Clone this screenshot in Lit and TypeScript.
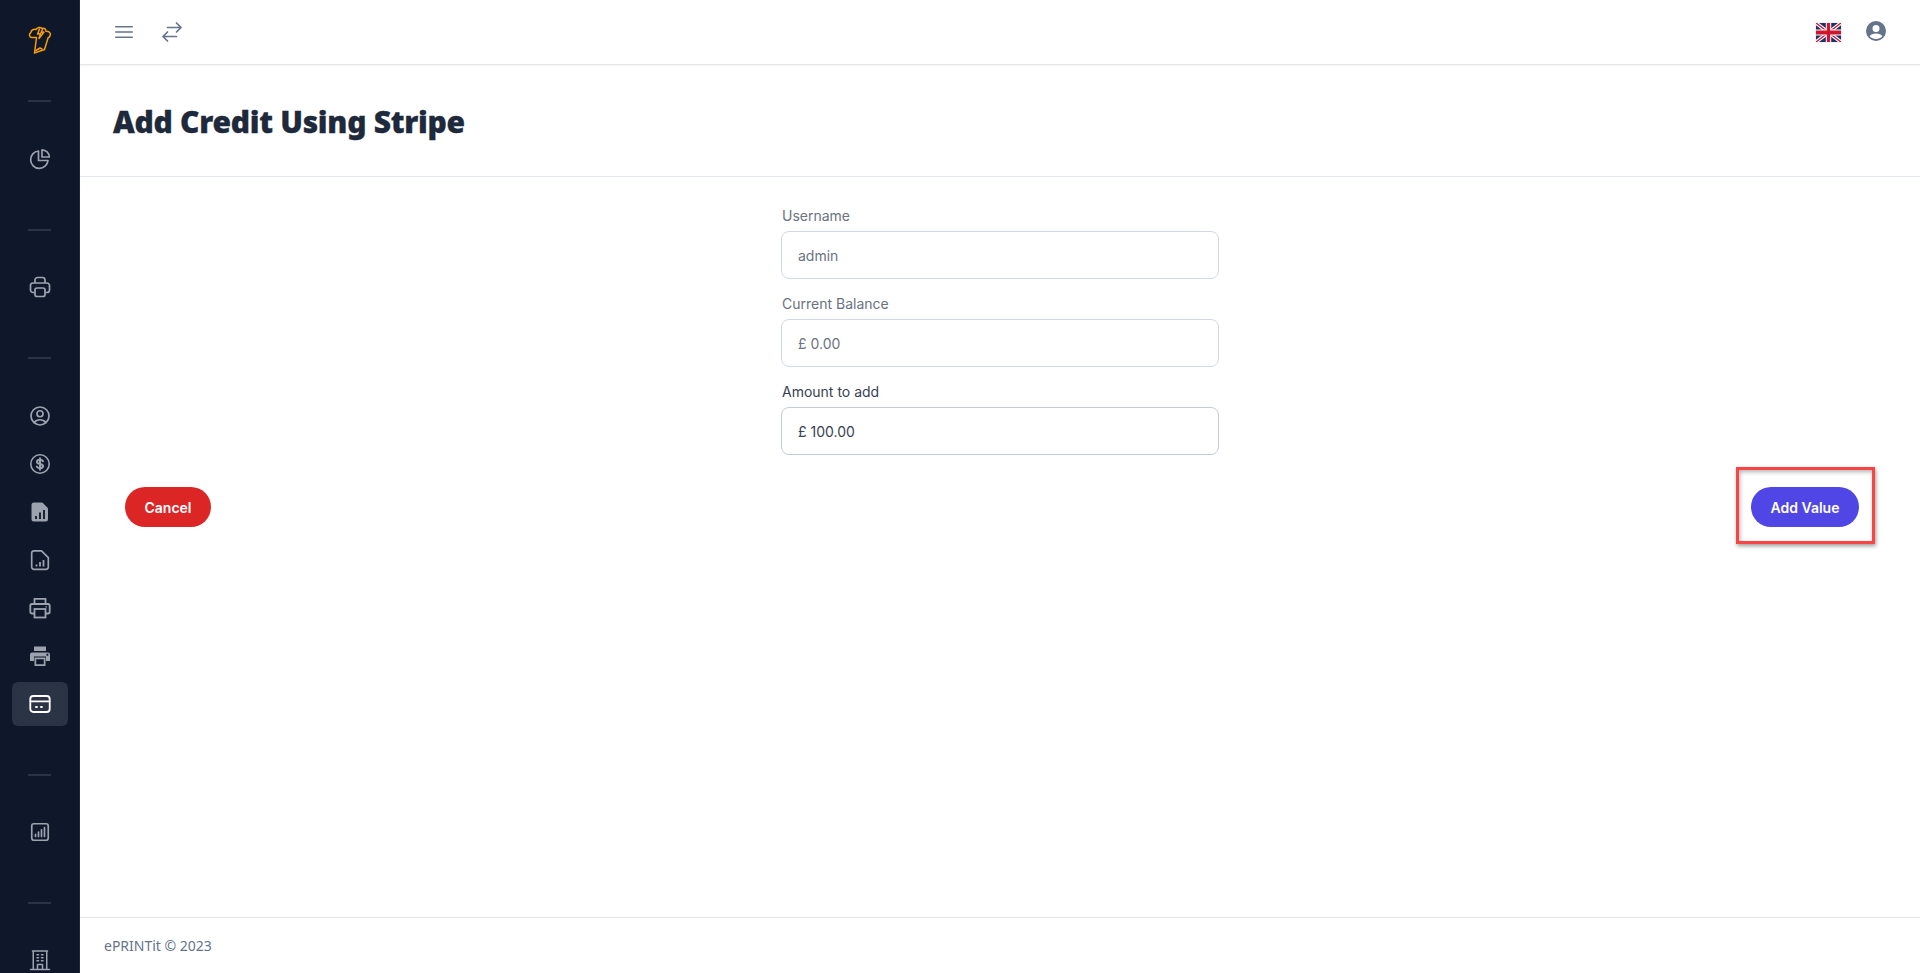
import { LitElement, html, css, svg } from "lit";
import { customElement } from "lit/decorators.js";

const o = (d: string, sw = 1.5) =>
  svg`<svg class="ic" viewBox="0 0 24 24" fill="none" stroke="currentColor" stroke-width=${sw} stroke-linecap="round" stroke-linejoin="round"><path d=${d}></path></svg>`;

const pie = svg`<svg class="ic" viewBox="0 0 24 24" fill="none" stroke="currentColor" stroke-width="1.700" stroke-linejoin="round"><path d="M10.500 4a8.700 8.700 0 1 0 9.500 9.500h-9.500z"></path><path d="M14 2.800a7.500 7.500 0 0 1 7.300 7.200H14z"></path></svg>`;
const printerRound = svg`<svg class="ic" viewBox="0 0 24 24" fill="none" stroke="currentColor" stroke-width="1.700" stroke-linejoin="round"><path d="M7 8V5a2.500 2.500 0 0 1 2.500-2.500h5A2.500 2.500 0 0 1 17 5v3"></path><path d="M7 17.500H5A2.500 2.500 0 0 1 2.500 15v-4.500A2.500 2.500 0 0 1 5 8h14a2.500 2.500 0 0 1 2.500 2.500V15a2.500 2.500 0 0 1-2.500 2.500h-2"></path><rect x="7" y="13" width="10" height="8.500" rx="2"></rect></svg>`;
const user = o("M17.982 18.725A7.488 7.488 0 0012 15.750a7.488 7.488 0 00-5.982 2.975m11.963 0a9 9 0 10-11.963 0m11.963 0A8.966 8.966 0 0112 21a8.966 8.966 0 01-5.982-2.275M15 9.750a3 3 0 11-6 0 3 3 0 016 0z", 1.7);
const dollar = svg`<svg class="ic" viewBox="0 0 24 24" fill="none" stroke="currentColor" stroke-linecap="round"><circle cx="12" cy="12" r="9.200" stroke-width="1.600"></circle><path stroke-width="2" d="M15 9.300c-.5-1-1.600-1.500-3-1.500-1.700 0-3 .8-3 2.100 0 2.900 6.100 1.300 6.100 4.200 0 1.300-1.400 2.100-3.100 2.100-1.500 0-2.700-.6-3.200-1.600M12 6.300v11.400"></path></svg>`;
const fileSolid = svg`<svg class="ic" viewBox="0 0 24 24"><path fill="currentColor" d="M6 2.500h7.500c.5 0 1 .2 1.400.6l4.500 4.500c.4.400.6.900.6 1.400V19a2.500 2.500 0 0 1-2.500 2.500H6A2.500 2.500 0 0 1 3.500 19V5A2.500 2.500 0 0 1 6 2.500z"></path><path stroke="#0f172a" stroke-width="1.800" fill="none" d="M8 19v-3M12 19v-6.500M16 19v-9"></path></svg>`;
const fileOutline = svg`<svg class="ic" viewBox="0 0 24 24" fill="none" stroke="currentColor" stroke-width="1.700" stroke-linejoin="round"><path d="M6 2.800h7.500l6.800 6.800V19a2.300 2.300 0 0 1-2.300 2.300H6A2.300 2.300 0 0 1 3.700 19V5.100A2.300 2.300 0 0 1 6 2.800z"></path><path stroke-width="1.800" d="M8.500 18.500v-2M12 18.500v-4.500M15.500 18.500v-6.500"></path></svg>`;
const printerO = svg`<svg class="ic" viewBox="0 0 24 24" fill="none" stroke="currentColor" stroke-width="1.800"><path d="M6.500 8V2.800h11V8"></path><path d="M6.500 17.500H4A1.700 1.700 0 0 1 2.300 15.800v-6A1.800 1.800 0 0 1 4 8h16a1.800 1.800 0 0 1 1.700 1.800v6a1.700 1.700 0 0 1-1.700 1.700h-2.500"></path><rect x="6.500" y="13" width="11" height="8.500"></rect><path stroke-width="1.300" d="M17.500 10.800h1.500"></path></svg>`;
const printerS = svg`<svg class="ic" viewBox="0 0 24 24"><path fill="currentColor" d="M6 2.500h12V7H6z"></path><path fill="currentColor" fill-rule="evenodd" d="M4 8.500h16a2 2 0 0 1 2 2V17h-4v-4.500H6V17H2v-6.500a2 2 0 0 1 2-2zm14.500 1.300v2h1.800v-2z"></path><path fill="currentColor" fill-rule="evenodd" d="M6.500 13.500h11v8.500h-11zm1.700 1.700v5.100h7.600v-5.100z"></path></svg>`;
const card = svg`<svg class="ic" viewBox="0 0 24 24" fill="none" stroke="currentColor" stroke-width="1.800" stroke-linecap="round"><rect x="2.300" y="4" width="19.400" height="16" rx="3"></rect><path d="M2.500 9.300h19"></path><path stroke-width="2" d="M8 15h.9M13 15h.9"></path></svg>`;
const chart = o("M7.500 16.500v-2.250m3 2.250V12m3 4.500V9.750m3 6.750V7.500M6 20.250h12A2.250 2.250 0 0020.250 18V6A2.250 2.250 0 0018 3.750H6A2.250 2.250 0 003.750 6v12A2.250 2.250 0 006 20.250z", 1.7);
const building = o("M2.500 21.500h19M4.500 3h15M5.250 3v18.500m13.500-18.500v18.500M9 6.750h1.500m-1.500 3h1.500m-1.500 3h1.500m3-6H15m-1.500 3H15m-1.500 3H15M9.500 21v-4.500h5V21");

@customElement("app-root")
export class AppRoot extends LitElement {
  static styles = css`
    :host { display: flex; width: 100%; height: 100vh; overflow: hidden; background: #fff; font-family: Inter, "Liberation Sans", sans-serif; }
    .side { flex: 0 0 80px; height: 100vh; background: #0f172a; color: #9ca3af; display: flex; flex-direction: column; align-items: center; overflow: hidden; border-right: 1px solid #1e293b; box-sizing: border-box; }
    .logo { flex: 0 0 100px; display: flex; align-items: flex-start; justify-content: center; padding-top: 26px; box-sizing: border-box; width: 100%; }
    .logo svg { width: 24px; height: 28px; }
    .sep { flex: 0 0 2px; width: 23px; background: #2a3445; margin-bottom: 34px; }
    .sep.wide { margin-bottom: 35px; }
    .list { display: flex; flex-direction: column; gap: 4px; margin-bottom: 48px; }
    .item { width: 56px; height: 44px; flex: 0 0 44px; display: flex; align-items: center; justify-content: center; border-radius: 6px; }
    .item.on { background: #2b3445; color: #fff; }
    .ic { width: 24px; height: 24px; display: block; }
    .main { flex: 1 1 auto; min-width: 0; height: 100vh; display: flex; flex-direction: column; }
    .top { flex: 0 0 64px; display: flex; align-items: center; padding: 0 32px 0 32px; border-bottom: 1px solid #e5e7eb; box-shadow: 0 1px 2px rgba(0,0,0,.05); color: #64748b; gap: 24px; }
    .top .ic { flex: none; }
    .spacer { flex: 1; }
    .right { display: flex; align-items: center; gap: 23px; }
    .flag { width: 25px; height: 19px; display: block; box-shadow: 0 0 1px rgba(0,0,0,.3); }
    .avatar { width: 24px; height: 24px; display: block; color: #64748b; margin-bottom: 2px; }
    .title { flex: 0 0 112px; box-sizing: border-box; display: flex; align-items: center; padding: 2px 33px 0; border-bottom: 1px solid #e2e8f0; }
    h1 { margin: 0; font: 900 30px/36px "Noto Sans", sans-serif; letter-spacing: -.28px; -webkit-text-stroke: .3px #1e293b; color: #1e293b; }
    .body { flex: 1 1 auto; display: flex; flex-direction: column; }
    form { width: 438px; margin: 0 auto; padding-top: 14px; display: flex; flex-direction: column; }
    label { display: block; height: 40px; box-sizing: border-box; padding: 15px 0 0 1px; font-size: 14px; line-height: 20px; color: #6b7280; }
    input { display: block; width: 100%; height: 48px; box-sizing: border-box; border: 1px solid #d1d9e6; border-radius: 8px; padding: 0 16px; font: 14px Inter, sans-serif; color: #6b7280; background: #fff; outline: none; }
    .live label { color: #374151; }
    .live input { color: #374151; border-color: #c3cbdb; }
    .actions { display: flex; justify-content: space-between; align-items: center; padding: 32px 61px 0 45px; }
    button { height: 40px; border: 0; border-radius: 20px; color: #fff; font: 600 14px Inter, sans-serif; padding: 0; white-space: nowrap; display: block; }
    .cancel { width: 86px; background: #dc2626; }
    .add { width: 108px; background: #4f46e5; }
    .mark { position: relative; display: block; }
    .mark::after { content: ""; position: absolute; left: -15px; top: -20px; right: -16px; bottom: -17px; border: 3px solid #f74444; box-shadow: 1px 2px 4px rgba(0,0,0,.4), inset 1px 2px 4px rgba(0,0,0,.3); pointer-events: none; }
    .foot { flex: 0 0 56px; border-top: 1px solid #e5e7eb; display: flex; align-items: center; padding: 0 24px; margin-top: auto; font: 14px "Noto Sans", sans-serif; color: #64748b; box-sizing: border-box; }
  `;

  render() {
    return html`
      <aside class="side">
        <div class="logo">
          <svg viewBox="0 0 24 28" fill="none" stroke="#f59e0b" stroke-width="1.500" stroke-linejoin="round" stroke-linecap="round">
            <path d="M8.500 11.500H4C1.300 11.500.5 8 2.800 6.500 3.300 3.800 5.800 2.800 8 3.500 9.500 1.200 12.500 1 14 2.500 16 1.500 18 3 18 5.200 20.800 5 22.800 7 22.300 9 21.900 10.600 21 11.500 20.200 11.500L16.500 23.500 6.500 27 8.500 11.500"></path>
            <path d="M11.500 3 9.500 8l3-.5-1.500 5 5-6.500-3 .5 1.500-3"></path>
            <path d="M8 24.500l4-2.500 2 1"></path>
          </svg>
        </div>
        <div class="sep wide"></div>
        <div class="list"><div class="item">${pie}</div></div>
        <div class="sep"></div>
        <div class="list"><div class="item">${printerRound}</div></div>
        <div class="sep wide"></div>
        <div class="list">
          <div class="item">${user}</div>
          <div class="item">${dollar}</div>
          <div class="item">${fileSolid}</div>
          <div class="item">${fileOutline}</div>
          <div class="item">${printerO}</div>
          <div class="item">${printerS}</div>
          <div class="item on">${card}</div>
        </div>
        <div class="sep"></div>
        <div class="list"><div class="item">${chart}</div></div>
        <div class="sep"></div>
        <div class="list"><div class="item">${building}</div></div>
      </aside>
      <div class="main">
        <header class="top">
          ${o("M3.750 6.750h16.500M3.750 12h16.500m-16.500 5.250h16.500")}
          ${o("M7.500 21L3 16.500m0 0L7.500 12M3 16.500h13.500m0-13.500L21 7.500m0 0L16.500 12M21 7.500H7.500", 1.7)}
          <div class="spacer"></div>
          <div class="right">
            <svg class="flag" viewBox="0 0 60 40" preserveAspectRatio="none">
              <rect width="60" height="40" fill="#1f2f6e"></rect>
              <path d="M0 0L60 40M60 0L0 40" stroke="#fff" stroke-width="8"></path>
              <path d="M0 0L60 40M60 0L0 40" stroke="#cf142b" stroke-width="3"></path>
              <path d="M30 0V40M0 20H60" stroke="#fff" stroke-width="13"></path>
              <path d="M30 0V40M0 20H60" stroke="#cf142b" stroke-width="8"></path>
            </svg>
            <svg class="avatar" viewBox="0 0 24 24"><path fill="currentColor" fill-rule="evenodd" d="M12 2a10 10 0 1 0 0 20 10 10 0 0 0 0-20zm0 4a3.500 3.500 0 1 1 0 7 3.500 3.500 0 0 1 0-7zm0 14c-2.500 0-4.800-1-6.300-2.800C6.700 15.300 9 14.500 12 14.500s5.300.8 6.300 2.700C16.800 19 14.500 20 12 20z"></path></svg>
          </div>
        </header>
        <div class="title"><h1>Add Credit Using Stripe</h1></div>
        <div class="body">
          <form>
            <div><label>Username</label><input readonly .value=${"admin"} /></div>
            <div><label>Current Balance</label><input readonly .value=${"£ 0.00"} /></div>
            <div class="live"><label>Amount to add</label><input .value=${"£ 100.00"} /></div>
          </form>
          <div class="actions">
            <button class="cancel" type="button">Cancel</button>
            <span class="mark"><button class="add" type="button">Add Value</button></span>
          </div>
          <footer class="foot">ePRINTit © 2023</footer>
        </div>
      </div>
    `;
  }
}
